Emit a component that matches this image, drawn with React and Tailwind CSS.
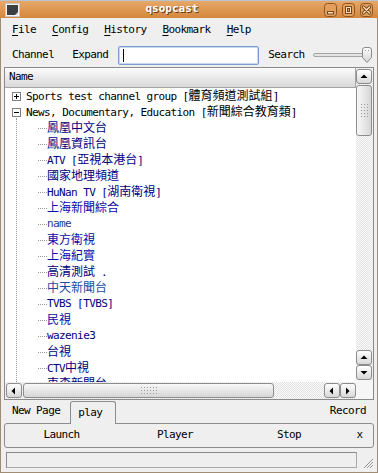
import React from "react";

const CJK = /([\u2E80-\u9FFF\uF900-\uFAFF\uFF00-\uFFEF]+)/;

function Mixed({ text }) {
  return text.split(CJK).map((part, i) =>
    i % 2 ? (
      <span key={i} className="font-['Noto_Sans_CJK_TC',sans-serif] text-[12px] tracking-normal">
        {part}
      </span>
    ) : (
      <span key={i}>{part}</span>
    )
  );
}

const channels = [
  { name: "鳳凰中文台", color: "text-[#00007f]" },
  { name: "鳳凰資訊台", color: "text-[#00007f]" },
  { name: "ATV [亞視本港台]", color: "text-[#00007f]" },
  { name: "國家地理頻道", color: "text-[#00007f]" },
  { name: "HuNan TV [湖南衛視]", color: "text-[#00007f]" },
  { name: "上海新聞綜合", color: "text-[#0a0aa6]" },
  { name: "name", color: "text-[#1c3c94]" },
  { name: "東方衛視", color: "text-[#0a0aa6]" },
  { name: "上海紀實", color: "text-[#0a0aa6]" },
  { name: "高清測試 .", color: "text-[#00007f]" },
  { name: "中天新聞台", color: "text-[#1a4aa0]" },
  { name: "TVBS [TVBS]", color: "text-[#00007f]" },
  { name: "民視", color: "text-[#0a0aa6]" },
  { name: "wazenie3", color: "text-[#00007f]" },
  { name: "台視", color: "text-[#00007f]" },
  { name: "CTV中視", color: "text-[#00007f]" },
  { name: "東森新聞台", color: "text-[#00007f]" },
];

const arrows = {
  up: "M0.5 5 L4 1.5 L7.5 5 Z",
  down: "M0.5 2 L4 5.5 L7.5 2 Z",
  left: "M5 0.5 L1.5 4 L5 7.5 Z",
  right: "M2 0.5 L5.5 4 L2 7.5 Z",
};

function ArrowBtn({ dir, className }) {
  return (
    <div
      className={`flex items-center justify-center rounded-[3px] border border-[#8c8c8c] bg-linear-to-b from-white to-[#d8d8d8] ${className}`}
    >
      <svg width="8" height="8" viewBox="0 0 8 8">
        <path d={arrows[dir]} fill="#000" />
      </svg>
    </div>
  );
}

function Grip({ cols, rows }) {
  return (
    <div className="grid gap-[2px]" style={{ gridTemplateColumns: `repeat(${cols}, 1px)` }}>
      {Array.from({ length: cols * rows }).map((_, i) => (
        <div key={i} className="w-[1px] h-[1px] bg-[#9a9a9a]" />
      ))}
    </div>
  );
}

function TitleButton({ kind }) {
  return (
    <svg width="13" height="14" viewBox="0 0 13 14">
      <rect x="0.5" y="0.5" width="12" height="13" rx="3" fill="#e3a05c" stroke="#8c5424" />
      {kind === "min" && (
        <rect x="3.5" y="8.5" width="6" height="2.5" fill="#fae0bf" stroke="#7a4418" />
      )}
      {kind === "max" && (
        <>
          <rect x="3.5" y="3.5" width="6" height="7" fill="#fae0bf" stroke="#7a4418" />
          <rect x="5.5" y="5.5" width="2" height="3" fill="#e3a05c" stroke="#7a4418" />
        </>
      )}
      {kind === "close" && (
        <>
          <path d="M3.5 4 L9.5 10 M9.5 4 L3.5 10" stroke="#7a4418" strokeWidth="3.2" strokeLinecap="round" />
          <path d="M3.5 4 L9.5 10 M9.5 4 L3.5 10" stroke="#fae0bf" strokeWidth="1.3" strokeLinecap="round" />
        </>
      )}
    </svg>
  );
}

function Expander({ open }) {
  return (
    <div className="w-[9px] h-[9px] border border-[#7f7f7f] bg-white flex items-center justify-center relative">
      <div className="w-[5px] h-[1px] bg-black" />
      {!open && <div className="absolute w-[1px] h-[5px] bg-black" />}
    </div>
  );
}

export default function App() {
  return (
    <div className="w-[378px] h-[473px] bg-[#efefef] flex flex-col overflow-hidden font-['DejaVu_Sans_Mono','Noto_Sans_CJK_TC',monospace] text-[11px] tracking-[-0.6px] text-black whitespace-pre">
      {/* title bar */}
      <div className="h-[18px] flex items-center bg-linear-to-b from-[#e6a868] to-[#d4873b] border-t border-[#b8c4d0]">
        <svg width="15" height="14" viewBox="0 0 15 14" className="ml-[5px]">
          <rect x="0.5" y="0.5" width="14" height="13" fill="#f4f4f4" stroke="#c8c8c8" />
          <rect x="2" y="2" width="11" height="10" fill="#3b3e42" />
          <path d="M10 12 L13 9 L13 12 Z" fill="#dcdcdc" />
        </svg>
        <div className="flex-1 text-center font-bold text-white text-[11px] tracking-[0px] [text-shadow:1px_1px_0_#6b3a10]">
          qsopcast
        </div>
        <div className="flex gap-[5px] mr-[5px]">
          <TitleButton kind="min" />
          <TitleButton kind="max" />
          <TitleButton kind="close" />
        </div>
      </div>

      <div className="flex-1 flex flex-col border-x border-b border-[#a08c74]">
        {/* menu */}
        <div className="h-[24px] flex items-center pl-[11px] gap-[16px]">
          {["File", "Config", "History", "Bookmark", "Help"].map((m) => (
            <span key={m}>
              <span className="underline underline-offset-[2px]">{m[0]}</span>
              {m.slice(1)}
            </span>
          ))}
        </div>

        {/* toolbar */}
        <div className="h-[25px] flex items-center pt-[1px]">
          <span className="ml-[11px]">Channel</span>
          <span className="ml-[18px]">Expand</span>
          <div className="ml-[10px] w-[141px] h-[19px] rounded-[2px] border border-[#7b9ccf] bg-white flex items-center shadow-[inset_0_0_0_1px_#c6d6ee]">
            <div className="ml-[4px] w-[1px] h-[13px] bg-black" />
          </div>
          <span className="ml-[9px]">Search</span>
          <div className="ml-[9px] w-[60px] h-[18px] relative flex items-center">
            <div className="w-[52px] h-[4px] rounded-full border border-[#a4a4a4] bg-[#e4e4e4]" />
            <svg width="12" height="18" viewBox="0 0 12 18" className="absolute right-0 top-0">
              <defs>
                <linearGradient id="hd" x1="0" y1="0" x2="0" y2="1">
                  <stop offset="0" stopColor="#ffffff" />
                  <stop offset="1" stopColor="#d2d2d2" />
                </linearGradient>
              </defs>
              <path d="M1.5 4 Q1.5 1.5 4 1.5 H8 Q10.5 1.5 10.5 4 V11.5 L6 16.5 L1.5 11.5 Z" fill="url(#hd)" stroke="#8a8a8a" />
              <rect x="4" y="4" width="1" height="1" fill="#9a9a9a" />
              <rect x="7" y="4" width="1" height="1" fill="#9a9a9a" />
            </svg>
          </div>
        </div>

        {/* tree frame */}
        <div className="ml-[3px] w-[370px] h-[333px] border border-[#8a8a8a] flex">
          <div className="w-[351px] flex flex-col">
            <div className="h-[20px] flex items-center pl-[4px] bg-linear-to-b from-[#fbfbfb] to-[#d9d9d9] border-b border-r border-[#a4a4a4]">
              Name
            </div>
            <div className="h-[294px] bg-white relative overflow-hidden">
              <div className="absolute left-[11px] top-[30px] bottom-0 border-l border-dotted border-[#9a9a9a]" />
              <div className="h-[16px] flex items-center pl-[7px]">
                <Expander open={false} />
                <span className="ml-[5px] leading-[16px]">
                  <Mixed text="Sports test channel group [體育頻道測試組]" />
                </span>
              </div>
              <div className="h-[16px] flex items-center pl-[7px]">
                <Expander open />
                <span className="ml-[5px] leading-[16px]">
                  <Mixed text="News, Documentary, Education [新聞綜合教育類]" />
                </span>
              </div>
              {channels.map((c) => (
                <div key={c.name} className="h-[16px] flex items-center pl-[33px]">
                  <div className="w-[9px] border-t border-dotted border-[#9a9a9a]" />
                  <span className={`leading-[16px] ${c.color}`}>
                    <Mixed text={c.name} />
                  </span>
                </div>
              ))}
            </div>
            <div className="h-[17px] flex items-center pl-[1px] bg-[image:repeating-conic-gradient(#e2e2e2_0%_25%,#fbfbfb_0%_50%)] bg-[length:2px_2px]">
              <ArrowBtn dir="left" className="w-[16px] h-[15px]" />
              <div className="ml-[1px] w-[251px] h-[15px] rounded-[3px] border border-[#8c8c8c] bg-linear-to-b from-[#f8f8f8] to-[#d6d6d6] flex items-center justify-center">
                <Grip cols={6} rows={3} />
              </div>
              <div className="flex-1" />
              <ArrowBtn dir="left" className="w-[16px] h-[15px]" />
              <ArrowBtn dir="right" className="w-[16px] h-[15px]" />
            </div>
          </div>
          <div className="w-[17px] flex flex-col bg-[image:repeating-conic-gradient(#e2e2e2_0%_25%,#fbfbfb_0%_50%)] bg-[length:2px_2px]">
            <ArrowBtn dir="up" className="mt-[1px] w-[16px] h-[15px]" />
            <div className="mt-[1px] w-[16px] h-[51px] rounded-[3px] border border-[#8c8c8c] bg-linear-to-r from-[#f8f8f8] to-[#d6d6d6] flex items-center justify-center">
              <Grip cols={3} rows={5} />
            </div>
            <div className="flex-1" />
            <ArrowBtn dir="up" className="w-[16px] h-[15px]" />
            <ArrowBtn dir="down" className="w-[16px] h-[15px]" />
            <div className="h-[19px] bg-[#f6f6f6]" />
          </div>
        </div>

        {/* tabs */}
        <div className="h-[23px] flex items-end">
          <span className="ml-[11px] mb-[4px]">New Page</span>
          <div className="ml-[10px] w-[46px] h-[23px] -mb-[1px] relative z-10 border-t border-x border-[#8c8c8c] rounded-t-[3px] bg-[#efefef] pl-[7px] pt-[3px]">
            play
          </div>
          <div className="flex-1" />
          <span className="mr-[11px] mb-[4px]">Record</span>
        </div>

        {/* panel */}
        <div className="ml-[3px] w-[370px] h-[25px] border border-[#8c8c8c] rounded-[3px] grid grid-cols-[113px_114px_114px_1fr] items-center text-center">
          <span>Launch</span>
          <span>Player</span>
          <span>Stop</span>
          <span>x</span>
        </div>

        {/* status */}
        <div className="flex items-start pt-[4px]">
          <div className="ml-[5px] w-[351px] h-[16px] border border-[#a8a8a8] border-t-[#8a8a8a] border-l-[#8a8a8a]" />
          <svg width="12" height="12" viewBox="0 0 12 12" className="ml-[5px] mt-[5px]">
            <path d="M11 2 L2 11 M11 5 L5 11 M11 8 L8 11" stroke="#8a8a8a" strokeWidth="1" />
            <path d="M11.5 3 L3 11.5 M11.5 6 L6 11.5 M11.5 9 L9 11.5" stroke="#ffffff" strokeWidth="1" />
          </svg>
        </div>
      </div>
    </div>
  );
}
